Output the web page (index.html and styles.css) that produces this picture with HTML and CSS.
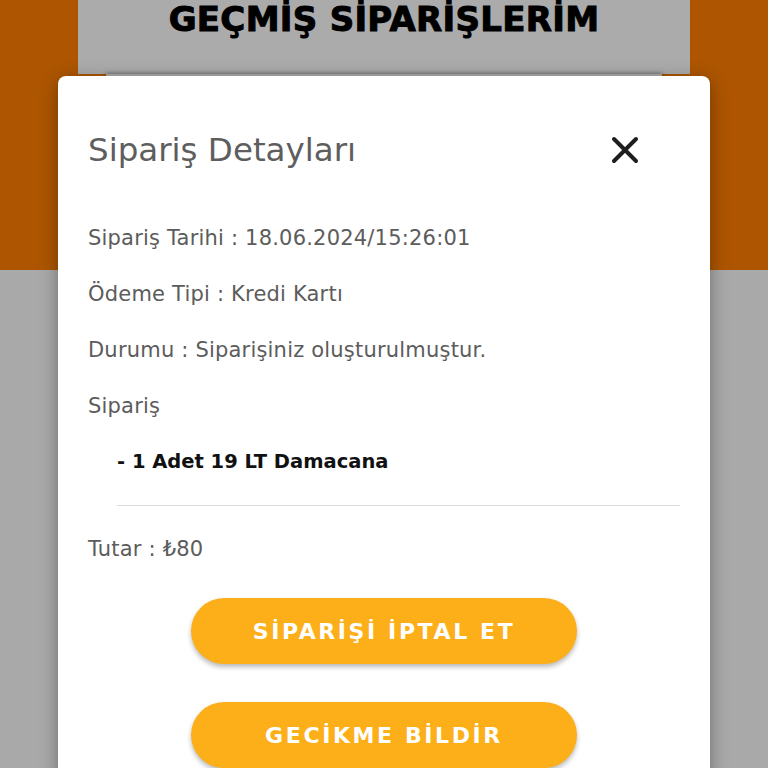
FILE: index.html
```html
<!DOCTYPE html>
<html lang="tr">
<head>
<meta charset="utf-8">
<title>Geçmiş Siparişlerim</title>
<link rel="stylesheet" href="styles.css">
</head>
<body>
<div class="page">
  <div class="hero">
    <div class="header-card">
      <h1 class="page-title">GEÇMİŞ SİPARİŞLERİM</h1>
    </div>
    <div class="sub-card"></div>
  </div>
  <div class="rest"></div>

  <div class="modal">
    <div class="modal-head">
      <h2 class="modal-title">Sipariş Detayları</h2>
      <svg class="close" width="28" height="28" viewBox="0 0 28 28" aria-label="Kapat">
        <path d="M3 3 L25 25 M25 3 L3 25" stroke="#1e1e1e" stroke-width="4" stroke-linecap="round" fill="none"/>
      </svg>
    </div>
    <div class="info">
      <div class="row">Sipariş Tarihi : 18.06.2024/15:26:01</div>
      <div class="row">Ödeme Tipi : Kredi Kartı</div>
      <div class="row">Durumu : Siparişiniz oluşturulmuştur.</div>
      <div class="row">Sipariş</div>
      <div class="row item">- 1 Adet 19 LT Damacana</div>
    </div>
    <div class="divider"></div>
    <div class="row total">Tutar : ₺80</div>
    <div class="actions">
      <button class="btn">SİPARİŞİ İPTAL ET</button>
      <button class="btn">GECİKME BİLDİR</button>
    </div>
  </div>
</div>
</body>
</html>
```

FILE: styles.css
```css
html, body {
  margin: 0;
  padding: 0;
  height: 100%;
  overflow: hidden;
}
body {
  font-family: "DejaVu Sans", "Noto Sans", sans-serif;
  background: #a9a9a9;
}
.page {
  position: relative;
  width: 768px;
  height: 768px;
  overflow: hidden;
}
.hero {
  height: 270px;
  background: #ad5500;
  display: flex;
  flex-direction: column;
  align-items: center;
}
.header-card {
  width: 612px;
  height: 74px;
  background: #ababab;
  display: flex;
  justify-content: center;
}
.page-title {
  margin: 0;
  padding-top: 1px;
  font-family: "DejaVu Sans", sans-serif;
  font-weight: 800;
  font-size: 34px;
  line-height: 36px;
  color: #000;
  letter-spacing: 0.3px;
  -webkit-text-stroke: 1px #000;
}
.sub-card {
  width: 556px;
  height: 60px;
  background: #a9a9a9;
  box-shadow: 0 -1px 4px rgba(0,0,0,0.35);
}
.rest {
  height: 498px;
  background: #a9a9a9;
}
.modal {
  position: absolute;
  left: 58px;
  top: 76px;
  width: 652px;
  height: 760px;
  background: #fff;
  border-radius: 8px;
  box-sizing: border-box;
  padding: 44px 30px 0 30px;
  box-shadow: 0 4px 18px rgba(0,0,0,0.35);
}
.modal-head {
  display: flex;
  align-items: center;
  justify-content: space-between;
  height: 60px;
  padding-right: 41px;
}
.modal-title {
  margin: 0;
  font-weight: 400;
  font-size: 32.5px;
  color: #5e5e5e;
}
.close {
  display: block;
}
.info {
  margin-top: 30px;
}
.row {
  height: 56px;
  line-height: 56px;
  font-size: 21px;
  letter-spacing: 0.2px;
  color: #5c5c5c;
  white-space: nowrap;
}
.item {
  padding-left: 29px;
  color: #111;
  font-weight: 600;
  font-size: 19.5px;
  letter-spacing: 0;
}
.divider {
  margin: 15px 0 15px 29px;
  height: 1px;
  background: #dcdcdc;
}
.actions {
  margin-top: 21px;
  display: flex;
  flex-direction: column;
  align-items: center;
  gap: 38px;
}
.btn {
  width: 386px;
  height: 66px;
  border: none;
  border-radius: 33px;
  background: #fdaf19;
  color: #fff;
  font-family: "DejaVu Sans", sans-serif;
  font-size: 22px;
  font-weight: 600;
  letter-spacing: 2.6px;
  box-shadow: 0 3px 5px rgba(0,0,0,0.28);
}
```
